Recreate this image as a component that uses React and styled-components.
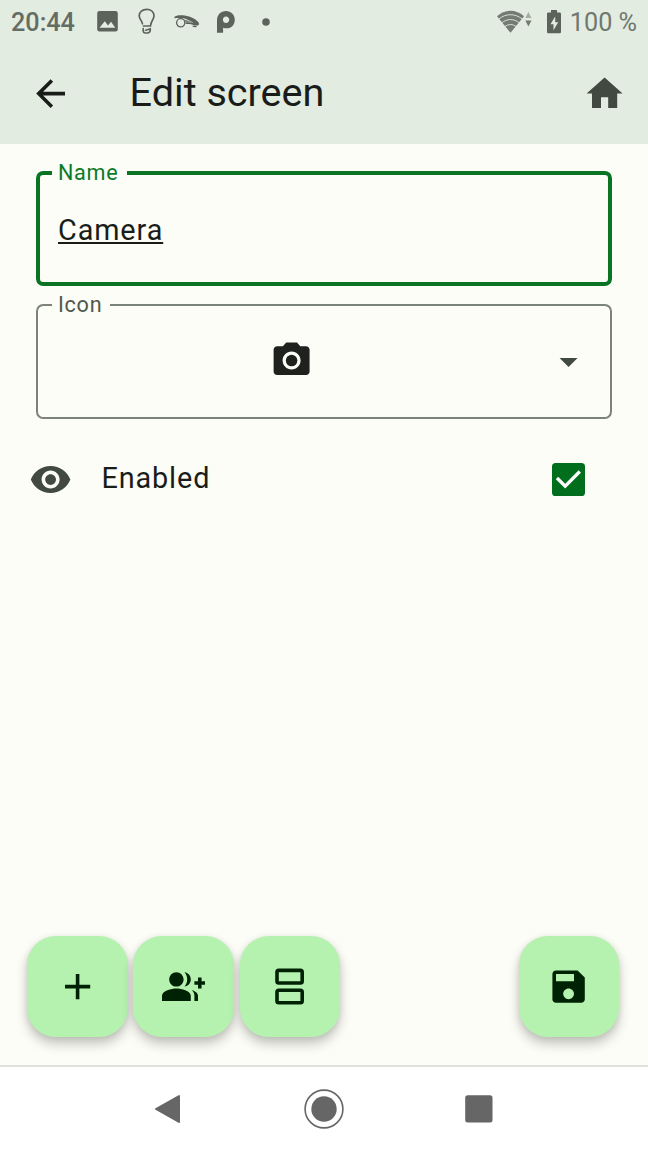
import React from "react";
import styled, { createGlobalStyle } from "styled-components";

const GlobalStyle = createGlobalStyle`
  html, body { margin: 0; padding: 0; }
  body {
    background: #fcfdf6;
    color: #1a1c19;
    font-family: Roboto, "Liberation Sans", sans-serif;
  }
  *, *::before, *::after { box-sizing: border-box; }
`;

const Screen = styled.div`
  display: flex;
  flex-direction: column;
  width: 648px;
  height: 1152px;
  overflow: hidden;
  background: #fcfdf6;
`;

const StatusBar = styled.div`
  display: flex;
  align-items: center;
  justify-content: space-between;
  height: 43.2px;
  padding: 0 11px;
  background: #e2ece0;
  color: #5c635b;
`;

const StatusGroup = styled.div`
  display: flex;
  align-items: center;
  height: 100%;
`;

const StatusText = styled.span`
  margin-left: ${(p) => p.$ml || 0}px;
  padding-top: 2px;
  font-size: 25.2px;
  line-height: 44px;
  font-weight: ${(p) => p.$weight || 500};
  color: ${(p) => p.$color || "#656c64"};
`;

const Glyph = styled.svg`
  display: block;
  flex: none;
  width: ${(p) => p.$w || 43.2}px;
  height: ${(p) => p.$h || p.$w || 43.2}px;
  margin-left: ${(p) => p.$ml || 0}px;
  fill: ${(p) => p.$color || "currentColor"};
`;

const AppBar = styled.header`
  display: flex;
  align-items: center;
  height: 100.8px;
  padding: 0 21.6px 0 28.8px;
  background: #e2ece0;
`;

const Title = styled.h1`
  flex: 1;
  margin: 0 0 0 57.6px;
  font-size: 39.6px;
  line-height: 50.4px;
  font-weight: 400;
  padding-bottom: 1px;
`;

const Form = styled.main`
  display: flex;
  flex-direction: column;
  height: 921px;
`;

const Field = styled.fieldset`
  display: flex;
  min-width: 0;
  height: ${(p) => p.$height}px;
  margin: ${(p) => p.$top}px 36px 0;
  padding: 0;
  border: ${(p) => (p.$focused ? "4px solid #0a7424" : "2px solid #7c8379")};
  border-radius: 7.2px;
`;

const Legend = styled.legend`
  margin-left: ${(p) => p.$ml}px;
  padding: 0 ${(p) => p.$pr}px 0 ${(p) => p.$pl}px;
  font-size: 21.6px;
  line-height: 28px;
  letter-spacing: 0.72px;
  color: ${(p) => p.$color};
`;

const NameValue = styled.span`
  padding: 26px 0 0 18px;
  font-size: 28.8px;
  line-height: 34px;
  letter-spacing: 0.9px;
  text-decoration: underline;
  text-decoration-thickness: 1.5px;
  text-underline-offset: 2px;
`;

const SelectValue = styled.div`
  display: flex;
  flex: 1;
  justify-content: space-between;
  align-items: flex-start;
  padding: 19.8px 19.6px 0 232px;
`;

const Chosen = styled.span`
  color: #1f211e;
`;

const Caret = styled.span`
  padding-top: 1.4px;
  color: #424940;
`;

const ToggleRow = styled.div`
  display: flex;
  align-items: center;
  height: 100.8px;
  margin-top: 9.4px;
  padding: 0 63px 0 28.6px;
`;

const ToggleLabel = styled.span`
  flex: 1;
  margin-left: 29.6px;
  font-size: 28.8px;
  line-height: 43.2px;
  letter-spacing: 0.9px;
  padding-bottom: 2px;
`;

const Checkbox = styled.span`
  display: flex;
  width: 32.6px;
  height: 32.6px;
  border-radius: 3.6px;
  background: #006e1c;
`;

const Actions = styled.footer`
  display: flex;
  gap: 5.4px;
  margin-top: auto;
  padding: 0 28.6px 28px 27.2px;
`;

const Fab = styled.button`
  display: flex;
  align-items: center;
  justify-content: center;
  width: 100.8px;
  height: 100.8px;
  padding: 0;
  border: 0;
  border-radius: 28.8px;
  margin-left: ${(p) => (p.$end ? "auto" : "0")};
  background: #b6f2af;
  color: #002204;
  box-shadow: 0 7px 12px rgba(0, 0, 0, 0.22), 0 1px 6px rgba(0, 0, 0, 0.08);
`;

const NavBar = styled.nav`
  display: flex;
  align-items: center;
  height: 87px;
  border-top: 2px solid #dfe0dc;
  background: #ffffff;
  padding: 0 0 0 154px;
`;

function Icon({ d, ...rest }) {
  return (
    <Glyph viewBox="0 0 24 24" {...rest}>
      <path d={d} />
    </Glyph>
  );
}

const paths = {
  back: "M20 11H7.83l5.59-5.59L12 4l-8 8 8 8 1.41-1.41L7.83 13H20v-2z",
  home: "M10 20v-6h4v6h5v-8h3L12 3 2 12h3v8z",
  caret: "M7 10l5 5 5-5z",
  eye: "M12 4.5C7 4.5 2.73 7.61 1 12c1.73 4.39 6 7.5 11 7.5s9.27-3.11 11-7.5c-1.73-4.39-6-7.5-11-7.5zM12 17c-2.76 0-5-2.24-5-5s2.24-5 5-5 5 2.24 5 5-2.24 5-5 5zm0-8c-1.66 0-3 1.34-3 3s1.34 3 3 3 3-1.34 3-3-1.34-3-3-3z",
  plus: "M19 13h-6v6h-2v-6H5v-2h6V5h2v6h6v2z",
  groupAdd:
    "M22 9V7h-2v2h-2v2h2v2h2v-2h2V9zM8 12c2.21 0 4-1.79 4-4s-1.79-4-4-4-4 1.79-4 4 1.79 4 4 4zm0 1c-2.67 0-8 1.34-8 4v3h16v-3c0-2.66-5.33-4-8-4zM12.51 4.05C13.43 5.11 14 6.49 14 8s-.57 2.89-1.49 3.95C14.47 11.7 16 10.04 16 8s-1.53-3.7-3.49-3.95zM16.53 13.83C17.42 14.66 18 15.7 18 17v3h2v-3c0-1.45-1.59-2.51-3.47-3.17z",
  save: "M17 3H5c-1.11 0-2 .9-2 2v14c0 1.1.89 2 2 2h14c1.1 0 2-.9 2-2V7l-4-4zm-5 16c-1.66 0-3-1.34-3-3s1.34-3 3-3 3 1.34 3 3-1.34 3-3 3zm3-10H5V5h10v4z",
};

export default function App() {
  return (
    <Screen>
      <GlobalStyle />
      <StatusBar>
        <StatusGroup>
          <StatusText>20:44</StatusText>
          {/* picture */}
          <Glyph viewBox="0 0 21 21" $w={21} $ml={22}>
            <path
              fillRule="evenodd"
              d="M2.5 0h16a2.3 2.3 0 0 1 2.3 2.3v16a2.3 2.3 0 0 1-2.3 2.3h-16A2.3 2.3 0 0 1 .2 18.3v-16A2.3 2.3 0 0 1 2.5 0zM2.5 16.8h15.8l-4.3-6-3 3.7-3.2-4.3z"
            />
          </Glyph>
          {/* light bulb */}
          <Glyph viewBox="0 0 18 27" $w={18} $h={27} $ml={20}>
            <g fill="none" stroke="currentColor" strokeWidth="1.7" strokeLinecap="round">
              <path d="M4.4 15.8C4.2 12.5 1.2 11.5 1.2 7.8C1.2 3.8 4.600 1.300 8.700 1.300S16 3.800 16 7.800C16 11.500 13 12.500 12.500 18H5.500" />
              <path d="M5.200 20.500v2.500c0 1 .8 1.800 2 2h2.600c1.500-.3 2.400-1.200 2.400-2.700V20.800l-4.500 1.400" />
            </g>
          </Glyph>
          {/* robot mower */}
          <Glyph viewBox="0 0 26 13" $w={26} $h={13} $ml={18}>
            <path d="M.3 2C2 .3 5 0 8.500.3c6 .4 12 2.600 16 6.900l.6 2-1.400 1.200-3.400.2c-2.200-1.300-5-1.700-8.400-1.600l-.2-1.300 7.600.2C16.500 5.600 12 3.800 9 3.300 6 2.800 3 3 .5 3.300z" />
            <path d="M10 4.600c3.500.5 7 2 9.500 4h-7.500z" opacity=".7" />
            <circle cx="6.700" cy="7.800" r="4.100" fill="#e2ece0" stroke="currentColor" strokeWidth="1.300" />
            <path d="M18 10.700l4.800.3-.6 1.300-3-.3z" />
          </Glyph>
          {/* parking badge */}
          <Glyph viewBox="0 0 18 22" $w={18} $h={22} $ml={17.500}>
            <path
              fillRule="evenodd"
              d="M0 9.200C0 3.800 4 0 9 0s8.800 3.700 8.800 8.700-3.500 8.600-8 8.600c-1.500 0-3-.3-3.700-.9v5.300H0zM9 5.500c-1.900 0-3.100 1.400-3.100 3.200S7.100 11.900 9 11.900s3.200-1.400 3.200-3.200S10.900 5.500 9 5.500z"
            />
          </Glyph>
          <Glyph viewBox="0 0 8 8" $w={8} $ml={26.500}>
            <circle cx="4" cy="4" r="3.800" />
          </Glyph>
        </StatusGroup>
        <StatusGroup>
          {/* wifi with traffic arrows */}
          <Glyph viewBox="0 0 36 24" $w={36} $h={24} $color="#747b72">
            <path d="M0 6.200C8-1.200 19-1.200 27 6.200L13.500 22.800z" />
            <g fill="none" stroke="#e2ece0" strokeWidth=".9">
              <path d="M1.500 9.200C9 3.200 18 3.200 25.500 9.200" />
              <path d="M4.500 13c5.500-4.600 12.500-4.600 18 0" />
              <path d="M7.500 16.800c3.600-3 8.400-3 12 0" />
            </g>
            <path d="M28.300 8l3.100-6 3.100 6z" opacity=".55" />
            <path d="M28.300 10.500l3.100 6 3.100-6z" />
          </Glyph>
          {/* charging battery */}
          <Glyph viewBox="0 0 14 24" $w={14} $h={24} $ml={14}>
            <path
              fillRule="evenodd"
              d="M4 0h6v2.500h2.600c.8 0 1.400.6 1.400 1.400v18c0 .8-.6 1.400-1.400 1.400H1.400C.6 23.300 0 22.700 0 21.900v-18c0-.8.6-1.400 1.400-1.400H4zM8.200 6.500l-4.700 7.700h3v6l4.700-7.900H8.200z"
            />
          </Glyph>
          <StatusText $ml={8.5} $weight={400} $color="#70776f">
            100 %
          </StatusText>
        </StatusGroup>
      </StatusBar>

      <AppBar>
        <Icon d={paths.back} />
        <Title>Edit screen</Title>
        <Icon d={paths.home} $color="#424940" />
      </AppBar>

      <Form>
        <Field $focused $height={127} $top={15}>
          <Legend $ml={12} $pl={6} $pr={8.5} $color="#0a7a28">
            Name
          </Legend>
          <NameValue>Camera</NameValue>
        </Field>
        <Field $height={128.5} $top={5}>
          <Legend $ml={13.5} $pl={6.5} $pr={7.5} $color="#50574e">
            Icon
          </Legend>
          <SelectValue>
            <Chosen>
              <Glyph viewBox="0 0 24 24">
                <path
                  fillRule="evenodd"
                  d="M9 2L7.17 4H4c-1.1 0-2 .9-2 2v12c0 1.1.9 2 2 2h16c1.1 0 2-.9 2-2V6c0-1.1-.9-2-2-2h-3.17L15 2H9zm3 15c-2.76 0-5-2.24-5-5s2.24-5 5-5 5 2.24 5 5-2.24 5-5 5z"
                />
                <circle cx="12" cy="12" r="3.2" />
              </Glyph>
            </Chosen>
            <Caret>
              <Icon d={paths.caret} />
            </Caret>
          </SelectValue>
        </Field>
        <ToggleRow>
          <Icon d={paths.eye} $color="#424940" />
          <ToggleLabel>Enabled</ToggleLabel>
          <Checkbox>
            <Glyph viewBox="0 0 32.6 32.6" $w={32.6}>
              <path d="M5 15l8.200 8.200L27.800 8.500" fill="none" stroke="#fff" strokeWidth="3.300" />
            </Glyph>
          </Checkbox>
        </ToggleRow>

        <Actions>
          <Fab aria-label="Add">
            <Icon d={paths.plus} />
          </Fab>
          <Fab aria-label="Add group">
            <Icon d={paths.groupAdd} />
          </Fab>
          <Fab aria-label="Add row">
            <Glyph viewBox="0 0 24 24">
              <g fill="none" stroke="currentColor" strokeWidth="2">
                <rect x="5" y="3" width="14" height="7" rx="1" />
                <rect x="5" y="14" width="14" height="7" rx="1" />
              </g>
            </Glyph>
          </Fab>
          <Fab $end aria-label="Save">
            <Icon d={paths.save} />
          </Fab>
        </Actions>
      </Form>

      <NavBar>
        <Glyph viewBox="0 0 27 30" $w={27} $h={30} $color="#666">
          <path d="M2 15L25 2v26z" stroke="#666" strokeWidth="2" strokeLinejoin="round" />
        </Glyph>
        <Glyph viewBox="0 0 40 40" $w={40} $ml={123} $color="#666">
          <circle cx="20" cy="20" r="18.9" fill="none" stroke="#666" strokeWidth="1.6" />
          <circle cx="20" cy="20" r="12.7" />
        </Glyph>
        <Glyph viewBox="0 0 28 28" $w={28} $ml={121} $color="#666">
          <rect x=".2" y=".2" width="27.3" height="27.3" rx="2.5" />
        </Glyph>
      </NavBar>
    </Screen>
  );
}
